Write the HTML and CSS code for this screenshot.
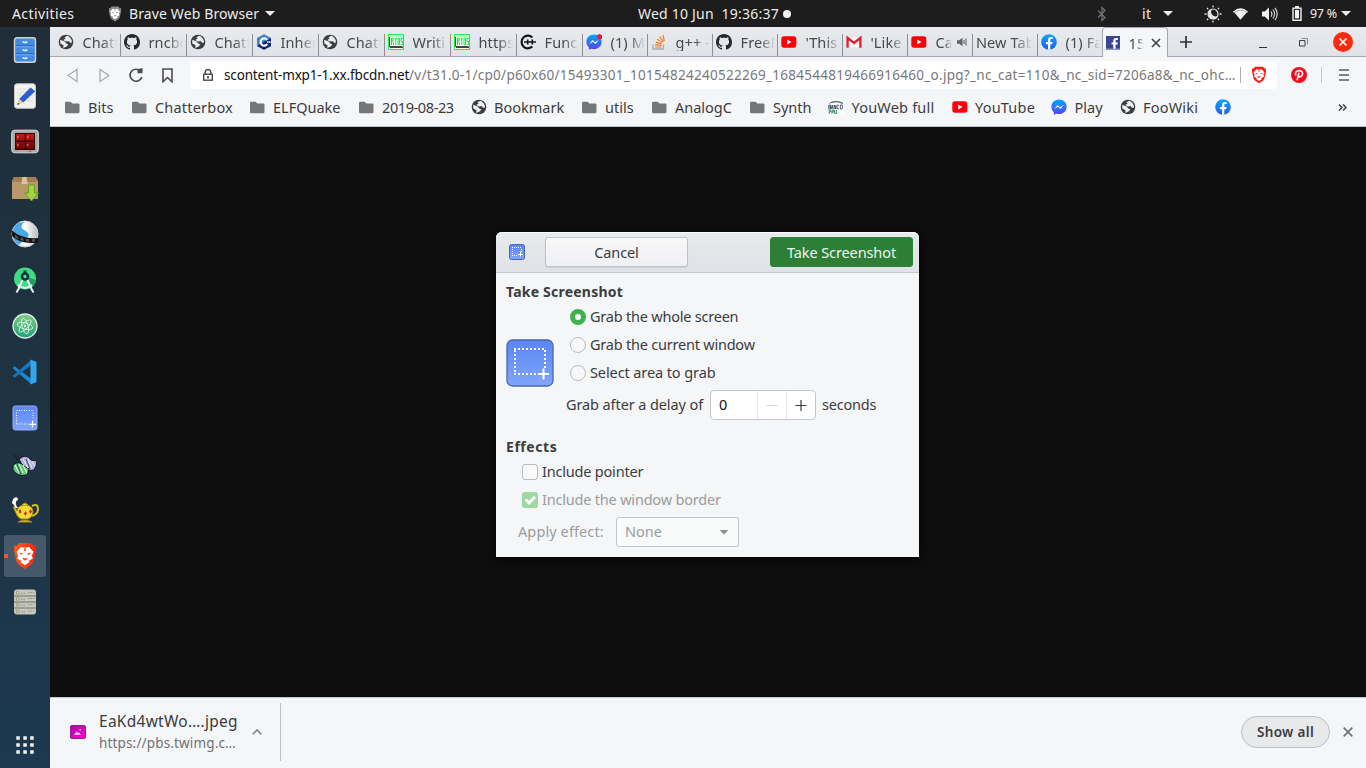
FILE: index.html
```html
<!DOCTYPE html>
<html lang="en">
<head>
<meta charset="utf-8">
<title>Desktop</title>
<link rel="stylesheet" href="styles.css">
</head>
<body>
<svg class="sprite" aria-hidden="true">
  <defs>
    <linearGradient id="gBlue" x1="0" y1="0" x2="0" y2="1"><stop offset="0" stop-color="#5a86f3"/><stop offset="1" stop-color="#82a5fb"/></linearGradient>
    <linearGradient id="gFb" x1="0" y1="0" x2="0" y2="1"><stop offset="0" stop-color="#12a5f8"/><stop offset="1" stop-color="#1c5cf0"/></linearGradient>
    <linearGradient id="gMsg" x1="0" y1="0" x2="0" y2="1"><stop offset="0" stop-color="#00a8ff"/><stop offset="1" stop-color="#5a3cf5"/></linearGradient>
    <linearGradient id="gBrave" x1="0" x2="1"><stop offset="0" stop-color="#ff5a1f"/><stop offset="1" stop-color="#f5260f"/></linearGradient>
    <linearGradient id="gAtom" x1="0" y1="0" x2="0" y2="1"><stop offset="0" stop-color="#82c884"/><stop offset="1" stop-color="#17a578"/></linearGradient>
    <linearGradient id="gPink" x1="0" y1="0" x2="1" y2="1"><stop offset="0" stop-color="#aa0aa5"/><stop offset="1" stop-color="#fb05cf"/></linearGradient>
    <linearGradient id="gBall" x1="0" y1="0" x2="1" y2="0"><stop offset="0" stop-color="#9ccdf0"/><stop offset=".5" stop-color="#fff"/><stop offset="1" stop-color="#b8bcc0"/></linearGradient>
    <linearGradient id="gRed" x1="0" y1="0" x2="0" y2="1"><stop offset="0" stop-color="#c41a1a"/><stop offset="1" stop-color="#6b0505"/></linearGradient>
  </defs>
  <symbol id="globe" viewBox="0 0 16 16"><circle cx="8" cy="8" r="7.3" fill="#3c3d3f"/><path d="M2.2 5.7 6.6 7.6 8.4 9.6 10.4 10.4 8.6 12.4 5.2 14.1 5.5 11.2 2.3 9.6ZM9.3 1.8 6.4 3.2 7.7 4.5 5.2 6.1 7.9 7.5 10.6 7.1 12 8.8 14.1 8.5C14 5.2 12.1 3 9.3 1.8Z" fill="#eef0f3"/></symbol>
  <symbol id="github" viewBox="0 0 16 16"><path fill="#24292e" d="M8 0C3.58 0 0 3.58 0 8c0 3.54 2.29 6.53 5.47 7.59.4.07.55-.17.55-.38 0-.19-.01-.82-.01-1.49-2.01.37-2.53-.49-2.69-.94-.09-.23-.48-.94-.82-1.13-.28-.15-.68-.52-.01-.53.63-.01 1.08.58 1.23.82.72 1.21 1.87.87 2.33.66.07-.52.28-.87.51-1.07-1.78-.2-3.64-.89-3.64-3.95 0-.87.31-1.59.82-2.15-.08-.2-.36-1.02.08-2.12 0 0 .67-.21 2.2.82.64-.18 1.32-.27 2-.27s1.36.09 2 .27c1.53-1.04 2.2-.82 2.2-.82.44 1.1.16 1.92.08 2.12.51.56.82 1.27.82 2.15 0 3.07-1.87 3.75-3.65 3.95.29.25.54.73.54 1.48 0 1.07-.01 1.93-.01 2.2 0 .21.15.46.55.38A8.01 8.01 0 0 0 16 8c0-4.42-3.58-8-8-8z"/></symbol>
  <symbol id="cpp" viewBox="0 0 16 16"><path d="M8 .2 15 4.1V11.9L8 15.8 1 11.9V4.1Z" fill="#3f7fc8"/><path d="M1 11.9 8 8 15 4.1V11.9L8 15.8Z" fill="#17246e"/><path d="M11.2 6A3.6 3.6 0 1 0 11.2 10" fill="none" stroke="#fff" stroke-width="2.2"/><path d="M11 8h3.6M11.8 7v2M13.8 7v2" stroke="#fff" stroke-width=".8"/></symbol>
  <symbol id="rtos" viewBox="0 0 16 16"><path d="M.5.5h15v15H.5z" fill="#fff" stroke="#16f243"/><path d="M1 2.5h14" stroke="#c9f7d2"/><path d="M1.500 3v9.500h13M2 13.500h13" fill="none" stroke="#444"/><path d="M3.5 11V4h1.600v3H3.500M5 7.500 5.600 11M6.500 4.300h2.600M7.800 4.300V11M10 4.300h1.600v6.300H10zM15 4.400h-2v3h1.700v3.200h-2" fill="none" stroke="#16e043"/></symbol>
  <symbol id="cppref" viewBox="0 0 16 16"><path d="M12.300 3.500A6.300 6.300 0 1 0 12.300 12.500" fill="none" stroke="#111722" stroke-width="2.200"/><path d="M4 8h12M7.700 5.400v5.200M12.300 5.400v5.200" stroke="#111722" stroke-width="1.600"/></symbol>
  <symbol id="msg" viewBox="0 0 16 16"><path d="M8 .6C3.6.6.4 3.7.4 7.8c0 2.3 1 4.2 2.5 5.4v2.6L5.3 14.7C6.2 15 7.1 15.1 8 15.1c4.4 0 7.6-3.1 7.600-7.300S12.400.600 8 .600Z" fill="url(#gMsg)"/><path d="m3.200 10.200 3.100-4.100 2.800 2.100 3.700-2.500-3.100 4.200-2.800-2.100Z" fill="#fff"/></symbol>
  <symbol id="so" viewBox="0 0 16 16"><path d="M2 10.500V15h10.500v-4.500" fill="none" stroke="#a8abae" stroke-width="1.300"/><path d="M4 13h6.500M4.200 10.600l6.400.7M4.800 8.100l6 1.700M6.200 5.200l5.200 3.300M8.700 2.600l3.600 5M12 1l1.300 6" stroke="#f48024" stroke-width="1.200"/></symbol>
  <symbol id="yt" viewBox="0 0 16 16"><rect x=".3" y="2.300" width="15" height="11.400" rx="2.600" fill="#fb0007"/><path d="m6.200 5.600 4.300 2.400-4.300 2.400Z" fill="#fff"/></symbol>
  <symbol id="gmail" viewBox="0 0 16 16"><path d="M2 3.500h12v10H2z" fill="#f7f7f7"/><path d="M1.600 13.800V3.800L8 9l6.400-5.200v10" fill="none" stroke="#dc2030" stroke-width="2.300"/></symbol>
  <symbol id="fb" viewBox="0 0 16 16"><circle cx="8" cy="8" r="7.8" fill="url(#gFb)"/><path d="M7 15.800v-5.500H4.900V8H7V6.200c0-2.200 1.200-3.200 3-3.200l1.700.1v2h-1.100c-1 0-1.300.4-1.300 1.200V8h2.300l-.4 2.300H9.300v5.500Z" fill="#fff"/></symbol>
  <symbol id="fbsq" viewBox="0 0 14 14"><path d="M0 0h14v14H0z" fill="#3b4590"/><path d="M0 12.500h14V14H0z" fill="#8a92c5"/><path d="M7.300 12.800V8.400H5.600V6.500h1.700V4.800c0-2 1-2.900 2.700-2.900h1.900v2h-1.200c-.9 0-1.100.3-1.100 1v1.600h2.200l-.3 1.900H9.600v4.400Z" fill="#fff"/></symbol>
  <symbol id="folder" viewBox="0 0 15 13"><path d="M0 2Q0 .7 1.200.7h4.400l1.800 1.700h5.700q1.400 0 1.400 1.300v7q0 1.600-1.500 1.600H1.400Q0 12.300 0 10.800Z" fill="#757677"/></symbol>
  <symbol id="banco" viewBox="0 0 16 16"><path d="M0 0h16v16H0z" fill="#fff"/><path d="M1 4.500Q8 .2 15 4" fill="none" stroke="#6b9f8d"/><path d="M3 3.700Q9 1.500 15 4.600" fill="none" stroke="#333b50" stroke-width=".7"/><path d="M.8 6v4h1.700V6ZM3.300 10 4.200 6 5.200 10M6.200 10V6l1.600 4V6M11 6.200H9v3.600h2M12.300 6h2v4h-2ZM.8 8h1.700M3.500 8.800h1.400" fill="none" stroke="#2d3b58" stroke-width=".8"/><path d="M1.200 15v-4h1.500v2H1.200M4 15v-4h1.600v2H4M6.600 11v3.500h1.800V11" fill="none" stroke="#3d8f68"/></symbol>
  <symbol id="brave" viewBox="0 0 24 28"><path d="M6 1h12l2.400 2.800 2-.2L23 8l-.6 3-2 8.400-2 3.200L12 27l-6.400-4.400-2-3.200L1.600 11 1 8l.6-4.400 2 .2Z"/><path fill="#fff" d="m8 5 4 .8L16 5l4.400 4.800-1.600 4 1 2.600-4.300 2.500 1 1.200-4.500 3.100-4.500-3.100 1-1.200-4.300-2.500 1-2.600-1.600-4Z"/><path d="m6.300 10.600 3.400.9-.5 1.300-2.300-.7ZM17.700 10.600l-3.400.9.500 1.300 2.300-.7ZM11.400 6h1.200l.3 3h-1.800ZM9.200 15.600l2.800.9 2.800-.9-1.600 2.300-1.200.6-1.200-.6Z"/></symbol>
  <symbol id="shot" viewBox="0 0 48 48"><rect x="1" y="1" width="46" height="46" rx="5.500" fill="url(#gBlue)" stroke="#4a65a8" stroke-width="1.300"/><path d="M8 10h31M9 11v25M39 11v18M8 35h23" fill="none" stroke="#fff" stroke-width="2" stroke-dasharray="2 2"/><path d="M37.500 29.500v11M32 35h11" stroke="#fff" stroke-width="2"/></symbol>
</svg>

<div class="desktop">
  <header class="topbar">
    <span class="activities">Activities</span>
    <svg class="tb-brave" viewBox="0 0 24 28"><use href="#brave"/></svg>
    <span class="appname">Brave Web Browser</span><i class="caret"></i>
    <span class="date">Wed 10 Jun&nbsp; 19:36:37</span><i class="dot"></i>
    <svg class="bt" viewBox="0 0 10 16"><path d="m1 4.500 7 7L5 14.500v-13L8 4.500l-7 7" fill="none" stroke="#777" stroke-width="1.200"/></svg>
    <span class="lang">it</span><i class="caret"></i>
    <svg class="night" viewBox="0 0 18 18"><circle cx="9" cy="9" r="5" fill="none" stroke="#ddd" stroke-width="1.200"/><path d="M8.500 4a5.100 5.100 0 1 0 5.600 6.500A4.300 4.300 0 0 1 8.500 4Z" fill="#e5e5e5"/><path d="M9 .5v2M9 15.500v2M.5 9h2M15.500 9h2M3 3l1.200 1.200M13.800 13.800 15 15M15 3l-1.200 1.200M4.200 13.800 3 15" stroke="#ddd" stroke-width="1.300"/></svg>
    <svg class="wifi" viewBox="0 0 18 14"><path d="M1 4.500Q9-2.500 17 4.500l-1 1.200Q9-.3 2 5.700Z" fill="#f2f2f2"/><path d="M2.500 5.500Q9 .8 15.500 5.500L9 13Z" fill="#f2f2f2"/></svg>
    <svg class="vol" viewBox="0 0 17 16"><path d="M1 5.500h2.700L8 1.500v13L3.700 10.500H1Z" fill="#f2f2f2"/><path d="M10 5.300q1.800 2.700 0 5.400M12 3.500q3.200 4.500 0 9M14 1.800q4.400 6.200 0 12.400" fill="none" stroke="#ccc" stroke-width="1.200"/></svg>
    <svg class="bat" viewBox="0 0 10 16"><path d="M3 0h4v1.500h3V16H0V1.500h3Z" fill="#f2f2f2"/><path d="M1.500 3h7v11.500h-7Z" fill="#1d1d1d"/><path d="M2.800 4.200h4.400v9H2.800Z" fill="#f2f2f2"/></svg>
    <span class="pct">97 %</span><i class="caret"></i>
  </header>

  <div class="workspace">
    <nav class="dock">
      <div class="app"><svg viewBox="0 0 28 28"><rect x="3.500" y="1.800" width="21" height="24.500" rx="2.500" fill="#438ce3" stroke="#d6d4cd" stroke-width="1.400"/><path d="M4.500 9.800h19M4.500 17.800h19" stroke="#2360b2"/><path d="M4.500 10.800h19M4.500 18.800h19" stroke="#75adf1"/><path d="M11.500 5.500q2.500 2 5 0M11.500 13.500q2.500 2 5 0M11.500 21.500q2.500 2 5 0" fill="none" stroke="#edf2f8" stroke-width="1.500"/></svg></div>
      <div class="app"><svg viewBox="0 0 28 28"><rect x="3.500" y="1.800" width="21" height="24.500" rx="2.500" fill="#f2f2f1" stroke="#c5c6c7"/><path d="M6 7h16M6 10h16M6 13h16M6 16h16M6 19h16" stroke="#d9dadb" stroke-width=".8"/><path d="m19.500 5.500 4.700 3.700L12.200 20.500l-4-3.500Z" fill="#2860d4"/><path d="m8.200 17 4 3.500-6 2.400Z" fill="#eac49a"/><path d="m6.200 22.900.8-2 1.500 1.100Z" fill="#222"/></svg></div>
      <div class="app"><svg viewBox="0 0 28 28"><rect x=".7" y="2.200" width="26.600" height="22.600" rx="3" fill="#a8aaa8" stroke="#dcddda"/><rect x="4" y="5" width="20" height="17" fill="#350606"/><path d="M5 6h8.700v6.500H5zM14.800 6h8.200v6.500h-8.200zM5 13.700h8.700v7H5zM14.800 13.700h8.200v7h-8.200z" fill="url(#gRed)"/><path d="m6 8 1.500 1L6 10M16 8l1.500 1-1.500 1M6 16l1.500 1L6 18M16 16l1.500 1-1.500 1" fill="none" stroke="#e99" stroke-width=".7"/><path d="M18 23.400h2.500" stroke="#f44" stroke-width="1.500"/></svg></div>
      <div class="app"><svg viewBox="0 0 28 28"><path d="M3 3h21.500L27 7v18H1V7Z" fill="#b9986c"/><path d="M3 3h21.500L27 8H1Z" fill="#a17e53"/><path d="M11.500 3h4l1 7h-6Z" fill="#d8c39d"/><path d="M17.500 11h6v8h4L20.500 27 13.500 19h4Z" fill="#a5d443" stroke="#679e20"/></svg></div>
      <div class="app"><svg viewBox="0 0 28 28"><circle cx="14" cy="14" r="13" fill="url(#gBall)" stroke="#cfd3d6"/><path d="M14 2c-4 2-5 6-1 8s7 5 2 9-8 6-8 6C0 19-1 10 7 3Z" fill="#4ca8e4"/><path d="M1 10.500q10 9 26 7.500v4.500Q10 25 1 16Z" fill="#141414"/><path d="m4 14.800 3 1.900v2.500l-3-2ZM9.500 17.600l3 .9V21l-3-1ZM15 19l3 .2v2.400l-3-.2ZM21 19.200l3-.2v2.400l-3 .3Z" fill="#555"/></svg></div>
      <div class="app"><svg viewBox="0 0 28 28"><circle cx="14" cy="12.500" r="11" fill="#3ddb83"/><path d="m16 11 9 3a11 11 0 0 1-6 8.500Z" fill="#289b63"/><path d="M14 4.500v4" stroke="#0b3442" stroke-width="3"/><circle cx="14" cy="10.500" r="3" fill="#5bdc93" stroke="#0b3442" stroke-width="2.600"/><path d="m5.500 26.500 2-3.500 4-9M22.500 26.500l-2-3.500-4-9M7 19q7 6 14 0" fill="none" stroke="#e9f1f5" stroke-width="2"/></svg></div>
      <div class="app"><svg viewBox="0 0 28 28"><circle cx="14" cy="14" r="12" fill="url(#gAtom)" stroke="#e5eee8" stroke-width="1.300"/><g fill="none" stroke="#def4e4" stroke-width=".9"><ellipse cx="14" cy="14" rx="8" ry="3" transform="rotate(15 14 14)"/><ellipse cx="14" cy="14" rx="8" ry="3" transform="rotate(75 14 14)"/><ellipse cx="14" cy="14" rx="8" ry="3" transform="rotate(135 14 14)"/></g><circle cx="14" cy="14" r="1.200" fill="#fff"/></svg></div>
      <div class="app"><svg viewBox="0 0 28 28"><path d="m1.500 10 2-1.800L20 20.500V26Z" fill="#1d88d0"/><path d="m1.500 18 2 1.800L20 7.500V2Z" fill="#1974b8"/><path d="m19.500 1.500 6 2.500v20l-6 2.500Z" fill="#32a5ee"/></svg></div>
      <div class="app"><svg viewBox="0 0 28 28"><rect x="2" y="2" width="24" height="24" rx="2.500" fill="url(#gBlue)" stroke="#93aef0"/><path d="M5.500 6.500h17M5.500 8.500v12M22 8.500v8M5.500 20h11" fill="none" stroke="#fff" stroke-dasharray="1 1.500"/><path d="M21.500 17v6.500M18 20.300h7" stroke="#fff" stroke-width="1.200"/></svg></div>
      <div class="app"><svg viewBox="0 0 28 28"><path d="m3 5 4 5M10 5v5" stroke="#222" stroke-width="2"/><path d="M8 9q7-6 12 1l6 1-1 5-2 4q-8 2-12-5Z" fill="#b0b1e1" stroke="#151820"/><path d="M2 15q6-5 11 1l5 3-2 6q-10 2-14-5Z" fill="#5fc977" stroke="#111820"/><path d="m4 15 4 8M8 14l4 9M12 15l4 8M12 9l5 9M17 9l4 9M21 12l3 4" stroke="#e0ece8" stroke-width="1.100"/><path d="m6 14 4 10M15 9l4 10" stroke="#24313a" stroke-width=".8"/></svg></div>
      <div class="app"><svg viewBox="0 0 28 28"><path d="M4 12q-1-4-3-5 0-3 2-5 4-2 4 2-3 1-2 4 0 2 2 4Z" fill="#fff"/><path d="M21 10q6-3 6 3 0 5-6 7" fill="none" stroke="#d5bd22" stroke-width="2"/><path d="M2 11q3 0 4 4 1-6 8-6t8 6q0 6-5 8H10Q6 21 5 17Z" fill="#f0dc37" stroke="#9c8515"/><path d="M11 9q3-4 6 0M7 26q7-4 14 0Z" fill="#e9cf31" stroke="#a28715"/><path d="m9 13 1.500 2.500L9 18l-1.500-2.500ZM14.500 15l1.500 2.500-1.500 2.500-1.500-2.500ZM19.500 13l1.500 2.500-1.500 2.500-1.500-2.500Z" fill="#cd2b20"/></svg></div>
      <div class="app app-active"><svg class="dock-brave" viewBox="0 0 24 28"><use href="#brave"/></svg></div>
      <div class="app"><svg viewBox="0 0 28 28"><rect x="3" y="1.500" width="22" height="25" rx="3" fill="#c7c6bb"/><path d="M3 8h22M3 14h22M3 20h22" stroke="#77786f" stroke-width="1.200"/><path d="M5.500 3.700h2.500v2.300H5.500zM5.500 9.700h2.500v2.300H5.500zM5.500 15.700h2.500v2.300H5.500zM5.500 22h2.500v2.300H5.500z" fill="#ddd" stroke="#8b9a66" stroke-width=".8"/><path d="M10 5.300h5M17 4.500h6M10 11.300h5M17 10.500h6M10 17.300h5M17 16.500h6M10 23.800h5M17 23h6" stroke="#96978f" stroke-dasharray="1.500 1"/></svg></div>
      <svg class="grid" viewBox="0 0 18 18"><path d="M.3.300h3.500v3.500H.3zM7.300.300h3.500v3.500H7.300zM14.200.300h3.500v3.500h-3.500zM.3 7.300h3.500v3.500H.3zM7.300 7.300h3.500v3.500H7.300zM14.200 7.300h3.500v3.500h-3.500zM.3 14.200h3.500v3.500H.3zM7.300 14.200h3.500v3.500H7.300zM14.200 14.200h3.500v3.500h-3.500z"/></svg>
    </nav>

    <main class="browser">
      <div class="tabs">
        <div class="tab first"><svg><use href="#globe"/></svg><span>Chatt</span></div>
        <div class="tab"><svg><use href="#github"/></svg><span>rncbc</span></div>
        <div class="tab"><svg><use href="#globe"/></svg><span>Chatt</span></div>
        <div class="tab"><svg><use href="#cpp"/></svg><span>Inher</span></div>
        <div class="tab"><svg><use href="#globe"/></svg><span>Chatt</span></div>
        <div class="tab"><svg><use href="#rtos"/></svg><span>Writi</span></div>
        <div class="tab"><svg><use href="#rtos"/></svg><span>https</span></div>
        <div class="tab"><svg><use href="#cppref"/></svg><span>Func</span></div>
        <div class="tab t65 badge"><svg><use href="#msg"/></svg><span>(1) M</span></div>
        <div class="tab t65"><svg><use href="#so"/></svg><span>g++ -</span></div>
        <div class="tab t65"><svg><use href="#github"/></svg><span>FreeR</span></div>
        <div class="tab t65"><svg><use href="#yt"/></svg><span>'This</span></div>
        <div class="tab t65"><svg><use href="#gmail"/></svg><span>'Like</span></div>
        <div class="tab t65 sound"><svg><use href="#yt"/></svg><span>Ca</span><svg class="spk" viewBox="0 0 10 10"><path d="M0 3.200h2.500L5.500.5v9L2.500 6.800H0Z" fill="#606266"/><path d="M7 3v4M9 1.500v7" stroke="#606266" stroke-width="1.100"/></svg></div>
        <div class="tab t65 plain"><span>New Tab</span></div>
        <div class="tab t65 last"><svg><use href="#fb"/></svg><span>(1) Fa</span></div>
        <div class="tab active"><svg viewBox="0 0 14 14"><use href="#fbsq"/></svg><span>15</span><svg class="close" viewBox="0 0 10 10"><path d="m1 1 8 8M9 1 1 9" stroke="#424448" stroke-width="1.700"/></svg></div>
        <svg class="plus" viewBox="0 0 12 12"><path d="M6 0v12M0 6h12" stroke="#2e3033" stroke-width="1.700"/></svg>
        <svg class="min" viewBox="0 0 8 12"><path d="M0 8.500h8" stroke="#333"/></svg>
        <svg class="max" viewBox="0 0 9 9"><path d="M.5 2.500h5.500V8H.5z" fill="none" stroke="#3c3e42"/><path d="M2.500.5h6v6" fill="none" stroke="#8a8d91"/></svg>
        <svg class="winx" viewBox="0 0 20 20"><circle cx="10" cy="10" r="10" fill="#fc2b0f"/><path d="m6.500 6.500 7 7M13.500 6.500l-7 7" stroke="#fff" stroke-width="1.700"/></svg>
      </div>
      <div class="toolbar">
        <svg class="back" viewBox="0 0 11 15"><path d="M10 1.500v12L1 7.500Z" fill="none" stroke="#a8aaad" stroke-width="1.300"/></svg>
        <svg class="fwd" viewBox="0 0 11 15"><path d="M1 1.500v12l9-6Z" fill="none" stroke="#a8aaad" stroke-width="1.300"/></svg>
        <svg class="reload" viewBox="0 0 16 16"><path d="M12.500 4.200a6 6 0 1 0 1.300 5.800" fill="none" stroke="#4b4c4f" stroke-width="1.700"/><path d="M9.500 2.300 14.500 1v5.300h-5Z" fill="#4b4c4f"/></svg>
        <svg class="bm" viewBox="0 0 11 15"><path d="M1 1h9v12.800L5.500 9.500 1 13.800Z" fill="none" stroke="#4b4c4f" stroke-width="1.600"/></svg>
        <div class="url">
          <svg class="lock" viewBox="0 0 10 12"><path d="M2.200 5V3.300a2.800 2.800 0 0 1 5.600 0V5" fill="none" stroke="#4a4a4c" stroke-width="1.500"/><rect x=".7" y="5.200" width="8.600" height="6" fill="none" stroke="#4a4a4c" stroke-width="1.400"/><path d="M4 7.300h2v2H4z" fill="#4a4a4c"/></svg>
          <span class="host">scontent-mxp1-1.xx.fbcdn.net</span><span class="path">/v/t31.0-1/cp0/p60x60/15493301_10154824240522269_1684544819466916460_o.jpg?_nc_cat=110&amp;_nc_sid=7206a8&amp;_nc_ohc…</span>
          <i class="vsep"></i><svg class="url-brave" viewBox="0 0 24 28"><use href="#brave"/></svg>
        </div>
        <svg class="pin" viewBox="0 0 16 16"><circle cx="8" cy="8" r="8" fill="#f50a1f"/><path d="m6 13.300 2-7.500M5 8.500C3.300 5.500 5.700 3.600 8 3.600c3.300 0 4.300 2.500 3.200 4.600-1 2-3.200 2-3.800.8" fill="none" stroke="#fff" stroke-width="1.600"/></svg>
        <i class="vsep sep2"></i>
        <svg class="menu" viewBox="0 0 10 12"><path d="M0 1h10M0 6h10M0 11h10" stroke="#5a5b5e" stroke-width="1.700"/></svg>
      </div>
      <div class="bookmarks">
        <a><svg class="f"><use href="#folder"/></svg>Bits</a>
        <a class="wide"><svg class="f"><use href="#folder"/></svg>Chatterbox</a>
        <a><svg class="f"><use href="#folder"/></svg>ELFQuake</a>
        <a class="tight"><svg class="f"><use href="#folder"/></svg>2019-08-23</a>
        <a><svg><use href="#globe"/></svg>Bookmark</a>
        <a><svg class="f"><use href="#folder"/></svg>utils</a>
        <a><svg class="f"><use href="#folder"/></svg>AnalogC</a>
        <a><svg class="f"><use href="#folder"/></svg>Synth</a>
        <a class="wide"><svg><use href="#banco"/></svg>YouWeb full</a>
        <a class="wide"><svg><use href="#yt"/></svg>YouTube</a>
        <a><svg><use href="#msg"/></svg>Play</a>
        <a class="wide"><svg><use href="#globe"/></svg>FooWiki</a>
        <a><svg><use href="#fb"/></svg></a>
        <svg class="more" viewBox="0 0 9 7"><path d="m1 .5 3 3-3 3M5 .5l3 3-3 3" fill="none" stroke="#3e4043" stroke-width="1.500"/></svg>
      </div>
      <div class="page"></div>
      <footer class="downloads">
        <svg class="jpeg" viewBox="0 0 16 14"><rect x=".5" y=".5" width="15" height="13" rx="1.500" fill="url(#gPink)" stroke="#9d1b8f"/><path d="m4 10 2.500-3.500L8 8l1-1 1.800 3ZM9.500 4h1.500v1.500H9.500z" fill="#f6b8ee"/></svg>
        <div class="file"><div class="fname">EaKd4wtWo….jpeg</div><div class="fsrc">https://pbs.twimg.c…</div></div>
        <svg class="chev" viewBox="0 0 10 6"><path d="m.7 5.300 4.300-4.300 4.300 4.300" fill="none" stroke="#7b7d80" stroke-width="1.500"/></svg>
        <i class="dsep"></i>
        <button class="showall">Show all</button>
        <svg class="dclose" viewBox="0 0 10 10"><path d="m.7.7 8.600 8.600M9.300.7.7 9.300" stroke="#6f7174" stroke-width="1.700"/></svg>
      </footer>
    </main>
  </div>

  <section class="dialog">
    <div class="dhead">
      <svg class="dicon" viewBox="0 0 16 16"><rect x=".5" y=".5" width="15" height="15" rx="2" fill="url(#gBlue)" stroke="#4a67b0"/><path d="M3 3.500h10M3.500 5v6.500M12.500 5v3M3 11.500h6" stroke="#fff" stroke-dasharray="1 1"/><path d="M11.500 7.500v5M9 10.500h5" stroke="#fff"/></svg>
      <button class="btn cancel">Cancel</button>
      <button class="btn take">Take Screenshot</button>
    </div>
    <div class="dbody">
      <h2 class="t1">Take Screenshot</h2>
      <div class="grab">
        <svg class="bigicon" viewBox="0 0 48 48"><use href="#shot"/></svg>
        <div class="opts">
          <label class="opt"><i class="radio on"></i><span class="l1">Grab the whole screen</span></label>
          <label class="opt"><i class="radio"></i><span class="l2">Grab the current window</span></label>
          <label class="opt"><i class="radio"></i><span class="l3">Select area to grab</span></label>
          <div class="delay"><span class="l4">Grab after a delay of</span>
            <div class="spin"><b>0</b><svg viewBox="0 0 28 28"><path d="M8.500 14.500h11" stroke="#d4d6d8"/></svg><svg viewBox="0 0 28 28"><path d="M8.500 14.500h11M14 9v11" stroke="#3b3c3e" stroke-width="1.200"/></svg></div>
            <span class="l5">seconds</span></div>
        </div>
      </div>
      <h2 class="t2">Effects</h2>
      <label class="chk"><i class="box"></i><span class="l6">Include pointer</span></label>
      <label class="chk off"><svg class="tick" viewBox="0 0 16 16"><rect width="16" height="16" rx="2.500" fill="#9ed8a4"/><path d="m3.700 7.500 3.300 3.500 6-6.300" fill="none" stroke="#fff" stroke-width="2.700"/></svg><span class="l7">Include the window border</span></label>
      <div class="effect"><span class="l8">Apply effect:</span><div class="select"><span>None</span><i></i></div></div>
    </div>
  </section>
</div>
</body>
</html>
```
FILE: styles.css
```css
* { box-sizing: border-box; }
body { margin: 0; font: 14.5px "Noto Sans", "Open Sans", sans-serif; color: #3b3c3e; }
svg { display: block; flex: none; }
i, b { font-style: normal; font-weight: normal; flex: none; }
.sprite { position: absolute; width: 0; height: 0; }
.desktop { position: relative; width: 1366px; height: 768px; overflow: hidden; display: flex; flex-direction: column; background: #0e0e0e; white-space: nowrap; }

.topbar { height: 27px; flex: none; background: #1d1d1d; color: #ececec; display: flex; align-items: center; padding-left: 12px; font-size: 14px; }
.topbar span { flex: none; }
.activities { width: 96px; letter-spacing: .4px; }
.tb-brave { width: 14px; height: 16px; fill: #888; margin-right: 7px; }
.appname { width: 136px; letter-spacing: .12px; }
.caret { width: 10px; height: 5px; background: #ececec; clip-path: polygon(0 0, 100% 0, 50% 100%); }
.date { margin-left: 363px; width: 145px; letter-spacing: .22px; }
.dot { width: 8px; height: 8px; border-radius: 50%; background: #f2f2f2; }
.bt { width: 10px; height: 16px; margin-left: 306px; }
.lang { margin-left: 35px; width: 21px; letter-spacing: .4px; }
.night { width: 18px; height: 18px; margin-left: 31px; }
.wifi { width: 17px; height: 14px; margin-left: 10px; }
.vol { width: 17px; height: 16px; margin-left: 12px; }
.bat { width: 10px; height: 15px; margin-left: 14px; }
.pct { width: 31px; margin-left: 8px; font-size: 12.5px; letter-spacing: -.3px; }

.workspace { flex: 1; display: flex; min-height: 0; }
.dock { width: 50px; flex: none; display: flex; flex-direction: column; align-items: center; background: linear-gradient(#202e39, #1e3445 65%, #1c3951); }
.app { width: 50px; height: 46px; display: flex; align-items: center; justify-content: center; flex: none; }
.app svg { width: 28px; height: 28px; }
.app-active { width: 42px; height: 42px; margin: 2px 0; border-radius: 3px; background: radial-gradient(circle at 2px 21px, #ed5b2f 0 2px, transparent 2.5px), #46596a; }
.dock-brave { fill: url(#gBrave); }
.grid { width: 18px; height: 18px; fill: #f2f2f2; margin: auto 0 14px; }

.browser { flex: 1; min-width: 0; display: flex; flex-direction: column; }
.tabs { height: 30px; flex: none; display: flex; align-items: flex-end; background: linear-gradient(#e9ebee, #dfe2e7); border-bottom: 1px solid #a5a8ae; }
.tab { width: 66px; height: 22px; flex: none; display: flex; align-items: center; border-right: 1px solid #8c9197; padding-left: 3px; padding-bottom: 6px; color: #48494c; }
.tab svg { width: 16px; height: 16px; }
.tab span { margin-left: 8.5px; width: 35px; overflow: hidden; font-size: 14.5px; line-height: 18px; letter-spacing: .1px; mask-image: linear-gradient(90deg, #000 55%, transparent 98%); }
.tab.first { width: 71px; padding-left: 8px; }
.tab.t65 { width: 65px; }
.tab.plain span { width: 58px; margin-left: 0; mask-image: linear-gradient(90deg, #000 65%, transparent 98%); }
.tab.sound span { width: 16px; }
.tab .spk { width: 10px; height: 10px; margin-left: 5px; }
.badge { background: radial-gradient(circle at 16.5px 3px, #fc1233 0 2.5px, transparent 3px); }
.badge svg { mask-image: radial-gradient(circle at 13.5px 2.5px, transparent 2.5px, #000 3px); }
.tab.last { border-right-color: transparent; }
.tab.active { width: 66px; height: 30px; margin-bottom: -1px; background: #f5f6f8; border: 1px solid #a3a7ad; border-bottom: 0; border-radius: 4px 4px 0 0; padding: 0 0 0 3px; margin-left: -1px; }
.tab.active > svg { width: 14px; height: 14px; }
.tab.active span { width: 15px; }
.tab.active .close { width: 10px; height: 10px; margin-left: 7px; }
.plus { width: 12px; height: 12px; margin: 0 0 8px 12px; }
.min { width: 8px; height: 12px; margin: 0 0 5px 67px; }
.max { width: 9px; height: 9px; margin: 0 0 9px 32px; }
.winx { width: 20px; height: 20px; margin: 0 0 4px 25px; }

.toolbar { height: 36px; flex: none; background: #f5f6f8; display: flex; align-items: center; padding-left: 17px; }
.back, .fwd { width: 11px; height: 15px; }
.fwd { margin-left: 21px; }
.reload { width: 16px; height: 16px; margin-left: 18px; }
.bm { width: 11px; height: 15px; margin-left: 18px; }
.url { width: 1087px; height: 28px; margin-left: 17px; background: #fff; border-radius: 4px; display: flex; align-items: center; padding-left: 13px; font-size: 13.5px; flex: none; }
.lock { width: 10px; height: 12px; margin-right: 11px; }
.host { color: #111; width: 185px; flex: none; letter-spacing: -.15px; }
.path { color: #77787b; width: 831px; flex: none; letter-spacing: .28px; }
.vsep { width: 1px; height: 16px; background: #aaadb1; }
.url-brave { width: 16px; height: 18px; fill: #f5190f; margin-left: 10px; }
.pin { width: 16px; height: 16px; margin-left: 14px; }
.sep2 { margin-left: 14px; background: #c4c7cc; }
.menu { width: 10px; height: 12px; margin-left: 17px; }

.bookmarks { height: 34px; flex: none; background: #f5f6f8; border-bottom: 1px solid #b9c0c7; display: grid; grid-template-columns: 67px 118px 109px 111.5px 111.5px 70px 98px 78px 123.5px 99.5px 68.5px 95.5px 123px 9px; align-items: center; padding: 0 0 5px 15px; }
.bookmarks a { display: flex; align-items: center; }
.bookmarks a svg { width: 16px; height: 16px; margin-right: 7.5px; }
.bookmarks a .f { width: 15px; height: 13px; margin-right: 8px; }
.wide { letter-spacing: .2px; }
.tight { letter-spacing: -.4px; }
.more { width: 9px; height: 7px; }

.page { flex: 1; background: #0e0e0e; }
.downloads { height: 71px; flex: none; background: #f5f6f8; border-top: 1px solid #c5c8cc; display: flex; align-items: center; padding: 0 0 2px 20px; }
.jpeg { width: 16px; height: 14px; }
.file { margin-left: 13px; width: 153px; line-height: 22px; }
.fname { font-size: 15.5px; letter-spacing: .27px; }
.fsrc { font-size: 13.5px; color: #707174; letter-spacing: .15px; }
.chev { width: 10px; height: 6px; }
.dsep { width: 1px; height: 58px; background: #b9c0c7; margin-left: 18px; }
.showall { width: 89px; height: 32px; margin-left: 960px; border: 1px solid #bcc0c6; border-radius: 16px; background: #e8e9ea; font: 600 13.5px "Noto Sans", sans-serif; letter-spacing: .35px; color: #3b3c3e; padding: 0; }
.dclose { width: 10px; height: 10px; margin-left: 13px; }

.dialog { position: absolute; left: 496px; top: 232px; width: 423px; height: 325px; background: #f5f6f7; border-radius: 6px 6px 0 0; box-shadow: 0 2px 8px #000; }
.dhead { height: 41px; display: flex; align-items: center; padding-left: 13px; border-radius: 6px 6px 0 0; background: linear-gradient(#e8eaed, #dfe2e6); border-bottom: 1px solid #c3c6ca; box-shadow: inset 0 1px #f8f9fa; }
.dicon { width: 16px; height: 16px; }
.btn { width: 143px; height: 30px; border-radius: 3px; font: 14.5px "Noto Sans", sans-serif; padding: 0 0 1px; color: #3b3c3e; letter-spacing: -.1px; }
.cancel { margin-left: 20px; border: 1px solid #bfc3c7; background: linear-gradient(#f8f8f9, #eff0f2); box-shadow: 0 1px 1px #ccd0d4; }
.take { margin-left: 82px; background: #2d7f38; border: 1px solid #2a8538; color: #eef6ef; }
.dbody { padding: 8px 10px 10px; }
h2 { margin: 0; font-size: 14px; line-height: 22px; font-weight: 700; letter-spacing: .22px; }
.grab { display: flex; align-items: center; }
.bigicon { width: 48px; height: 48px; margin-top: 3px; }
.opts { margin-left: 12px; }
.opt { height: 28px; display: flex; align-items: center; padding-left: 4px; }
.opt span, .chk span, .delay > span, .l8, .select span, .spin b { padding-bottom: 2px; }
.radio { width: 16px; height: 16px; margin-right: 4px; border-radius: 50%; border: 1px solid #b5bcc4; background: #f8f8f9; }
.radio.on { border: 5px solid #3fb24f; background: #fff; }
.delay { height: 30px; margin-top: 3px; display: flex; align-items: center; }
.l1, .l2 { letter-spacing: -.22px; }
.l3, .l4 { letter-spacing: -.1px; }
.l5, .l6, .l7 { letter-spacing: -.2px; }
.l4 { width: 144px; }
.spin { width: 106px; height: 30px; border: 1px solid #c2c6cb; border-radius: 4px; background: #fff; display: flex; align-items: center; margin-right: 6px; }
.spin b { width: 46px; padding-left: 8px; color: #111; }
.spin svg { width: 29px; height: 28px; border-left: 1px solid #e4e6e8; }
.t2 { margin-top: 16px; letter-spacing: .55px; }
.chk { height: 28px; display: flex; align-items: center; padding-left: 16px; }
.box { width: 16px; height: 16px; margin-right: 4px; border: 1px solid #b2bac3; border-radius: 3px; background: #f8f8f9; }
.tick { width: 16px; height: 16px; margin-right: 4px; }
.off, .effect { color: #9a9c9e; }
.effect { height: 30px; margin-top: 3px; padding-left: 12px; display: flex; align-items: center; }
.l8 { width: 98px; letter-spacing: .1px; }
.select { width: 123px; height: 30px; border: 1px solid #c2c6cb; border-radius: 3px; background: #f9fafa; display: flex; align-items: center; justify-content: space-between; padding: 0 9px 0 8px; }
.select i { width: 10px; height: 5px; background: #8f9193; clip-path: polygon(0 0, 100% 0, 50% 100%); }
```
